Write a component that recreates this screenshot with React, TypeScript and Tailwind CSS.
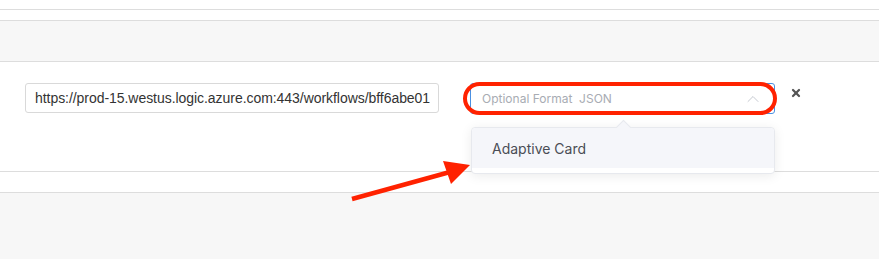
import { ChevronUp, X } from 'lucide-react';

export default function App() {
  return (
    <div className="relative h-[259px] w-[879px] overflow-hidden bg-[#f7f7f7] font-['Liberation_Sans',Arial,sans-serif]">
      <div className="h-[9px] bg-white" />
      <div className="h-[11px] border-t border-[#dddddd] bg-white" />
      <div className="h-[41px] border-t border-[#dddddd] bg-[#f7f7f7]" />
      <div className="h-[110px] border-t border-[#dddddd] bg-white">
        <div className="flex items-start pt-[21px]">
          <div className="ml-[25px] flex h-[30px] w-[414px] items-center overflow-hidden whitespace-nowrap rounded-[3px] border border-[#d9d9d9] bg-white px-[9px] text-[14px] tracking-[-0.05px] text-[#333]">
            https://prod-15.westus.logic.azure.com:443/workflows/bff6abe01
          </div>
          <div className="relative ml-[31px] w-[305px]">
            <div className="flex h-[31px] items-center justify-between rounded-[3px] border border-[#4a90e2] bg-white pl-[11px] pr-[11px] font-['Inter',sans-serif] text-[12px] text-[#a8acb3]">
              <span className="whitespace-pre">Optional Format  JSON</span>
              <ChevronUp className="h-[20px] w-[20px] text-[#c0c4cc]" strokeWidth={1.1} />
            </div>
            <div className="absolute left-[1px] top-[44px] z-10 w-[304px] rounded-[4px] border border-[#e7e9ee] bg-white pb-[5px] shadow-[0_2px_12px_rgba(0,0,0,0.08)]">
              <div className="absolute -top-[6px] left-[146px] h-[11px] w-[11px] rotate-45 border-l border-t border-[#e7e9ee] bg-[#f5f6fa]" />
              <div className="relative flex h-[40px] items-center rounded-t-[4px] bg-[#f5f6fa] pl-[20px] font-['Inter',sans-serif] text-[14px] text-[#4a4d55]">
                Adaptive Card
              </div>
            </div>
          </div>
          <X className="ml-[15px] mt-[4px] h-[12px] w-[12px] text-[#555]" strokeWidth={4.5} />
        </div>
      </div>
      <div className="h-[21px] border-t border-[#dddddd] bg-white" />
      <div className="border-t border-[#dddddd] bg-[#f7f7f7]" />

      <div className="pointer-events-none absolute left-[463px] top-[82px] h-[33px] w-[314px] rounded-full border-[4px] border-[#ff2200]" />
      <svg className="pointer-events-none absolute left-0 top-0" width="879" height="259" viewBox="0 0 879 259">
        <line x1="352" y1="199" x2="450" y2="172" stroke="#ff2200" strokeWidth="4.5" />
        <polygon points="470,165 443,161 451,184" fill="#ff2200" />
      </svg>
    </div>
  );
}
